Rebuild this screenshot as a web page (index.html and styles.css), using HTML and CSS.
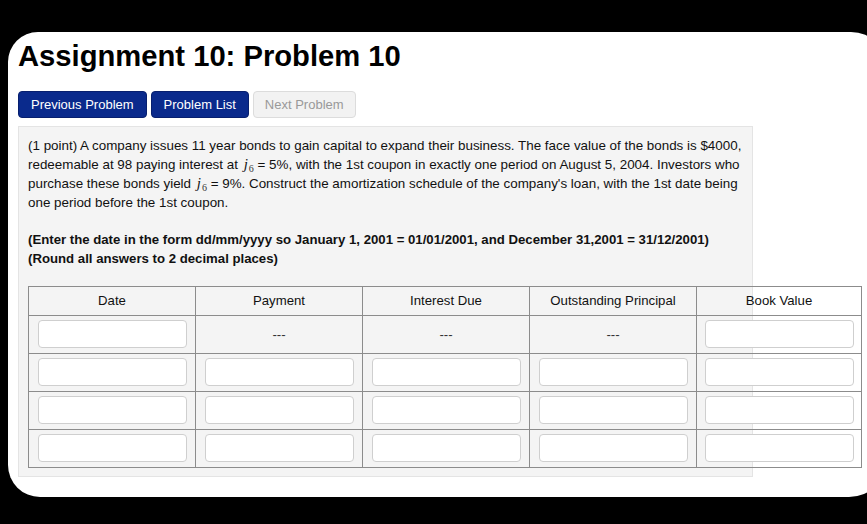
FILE: index.html
```html
<!DOCTYPE html>
<html>
<head>
<meta charset="utf-8">
<link rel="stylesheet" href="styles.css">
</head>
<body>
<div class="window">
  <h1 class="title">Assignment 10: Problem 10</h1>
  <div class="nav">
    <button class="btn btn-primary">Previous Problem</button>
    <button class="btn btn-primary">Problem List</button>
    <button class="btn btn-disabled">Next Problem</button>
  </div>
  <div class="problem">
    <p class="text">(1 point) A company issues 11 year bonds to gain capital to expand their business. The face value of the bonds is $4000, redeemable at 98 paying interest at <span class="math"><i>j</i><sub>6</sub></span> = 5%, with the 1st coupon in exactly one period on August 5, 2004. Investors who purchase these bonds yield <span class="math"><i>j</i><sub>6</sub></span> = 9%. Construct the amortization schedule of the company's loan, with the 1st date being one period before the 1st coupon.</p>
    <p class="text bold">(Enter the date in the form dd/mm/yyyy so January 1, 2001 = 01/01/2001, and December 31,2001 = 31/12/2001)<br>(Round all answers to 2 decimal places)</p>
    <table class="schedule">
      <colgroup>
        <col class="c"><col class="c"><col class="c"><col class="c"><col class="c last">
      </colgroup>
      <thead>
        <tr><th>Date</th><th>Payment</th><th>Interest Due</th><th>Outstanding Principal</th><th>Book Value</th></tr>
      </thead>
      <tbody>
        <tr>
          <td><input class="field" type="text"></td>
          <td class="dash">---</td>
          <td class="dash">---</td>
          <td class="dash">---</td>
          <td><input class="field" type="text"></td>
        </tr>
        <tr>
          <td><input class="field" type="text"></td>
          <td><input class="field" type="text"></td>
          <td><input class="field" type="text"></td>
          <td><input class="field" type="text"></td>
          <td><input class="field" type="text"></td>
        </tr>
        <tr>
          <td><input class="field" type="text"></td>
          <td><input class="field" type="text"></td>
          <td><input class="field" type="text"></td>
          <td><input class="field" type="text"></td>
          <td><input class="field" type="text"></td>
        </tr>
        <tr>
          <td><input class="field" type="text"></td>
          <td><input class="field" type="text"></td>
          <td><input class="field" type="text"></td>
          <td><input class="field" type="text"></td>
          <td><input class="field" type="text"></td>
        </tr>
      </tbody>
    </table>
  </div>
</div>
</body>
</html>
```

FILE: styles.css
```css
html {
  margin: 0;
  padding: 0;
  background: #000;
  height: 524px;
  overflow: hidden;
}
body {
  margin: 0;
  padding: 32px 0 0 0;
  font-family: "Liberation Sans", Arial, Helvetica, sans-serif;
  color: #111;
}
.window {
  box-sizing: border-box;
  margin-left: 8px;
  width: 880px;
  height: 465px;
  background: #fff;
  border-radius: 30px 37px 39px 32px;
  padding: 8px 10px 0 10px;
}
.title {
  margin: 0;
  font-size: 29.2px;
  font-weight: bold;
  line-height: 33px;
  color: #000;
}
.nav {
  display: flex;
  gap: 4px;
  margin-top: 18px;
}
.btn {
  box-sizing: border-box;
  height: 27px;
  padding: 0 12px;
  font-family: "Liberation Sans", Arial, sans-serif;
  font-size: 13px;
  border-radius: 4px;
  border: 1px solid;
}
.btn-primary {
  background: #0a2a8c;
  border-color: #071f6e;
  color: #fff;
}
.btn-disabled {
  background: #f2f2f2;
  border-color: #dcdcdc;
  color: #999;
  padding: 0 11px;
}
.problem {
  box-sizing: border-box;
  width: 735px;
  margin-top: 8px;
  background: #f4f4f4;
  border: 1px solid #e4e4e4;
  padding: 9px 6px 8px 9px;
}
.text {
  margin: 0 0 18px 0;
  font-size: 13.4px;
  line-height: 19px;
  color: #111;
}
.bold {
  font-weight: bold;
  font-size: 13.2px;
  margin-bottom: 18px;
}
.math {
  display: inline-block;
  white-space: nowrap;
  line-height: 19px;
  padding-left: 2px;
}
.math i {
  font-family: "Liberation Serif", "Times New Roman", serif;
  font-size: 15px;
  line-height: 19px;
  margin-right: 1px;
}
.math sub {
  font-family: "Liberation Serif", "Times New Roman", serif;
  font-size: 10px;
  vertical-align: -3px;
  line-height: 10px;
  color: #333;
}
.schedule {
  border-collapse: collapse;
  table-layout: fixed;
  width: 833px;
  font-size: 13.2px;
  color: #111;
}
.c {
  width: 167px;
}
.c.last {
  width: 165px;
}
.schedule th,
.schedule td {
  border: 1px solid #8c8c8c;
}
.schedule th {
  font-weight: normal;
  padding: 6px 8px;
  line-height: 16px;
  text-align: center;
}
.schedule td {
  padding: 4px 8px 5px 8px;
  text-align: center;
}
.dash {
  color: #333;
}
.field {
  display: block;
  box-sizing: border-box;
  width: 149px;
  height: 28px;
  margin: 0 auto;
  background: #fff;
  border: 1px solid #cfcfcf;
  border-radius: 4px;
  padding: 0 6px;
}
```
